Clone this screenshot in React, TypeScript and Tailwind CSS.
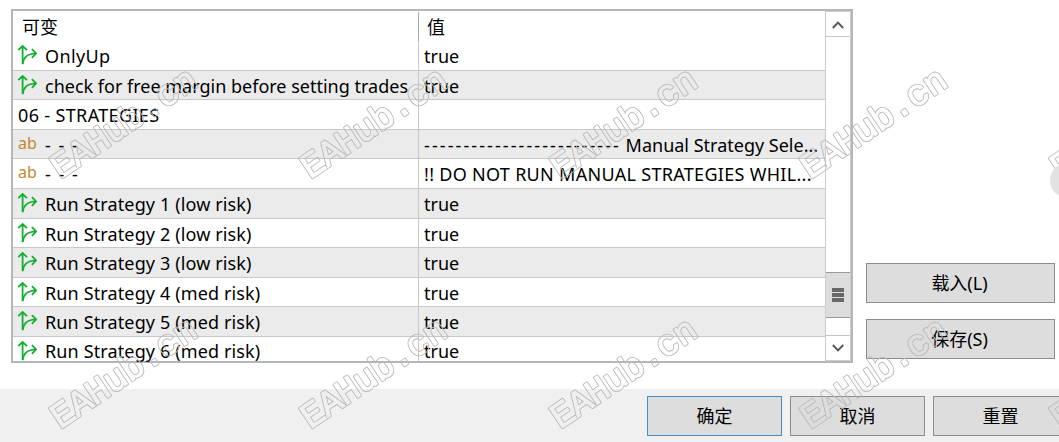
import type { ReactNode } from "react";

type Kind = "bool" | "string" | "group";

interface Row {
  kind: Kind;
  name: string;
  value: ReactNode;
  size: string;
  nameSpacing: string;
}

const rows: Row[] = [
  { kind: "bool", name: "OnlyUp", value: "true", size: "h-[30px]", nameSpacing: "tracking-[0.35px]" },
  { kind: "bool", name: "check for free margin before setting trades", value: "true", size: "h-[29px]", nameSpacing: "tracking-normal" },
  { kind: "group", name: "06 - STRATEGIES", value: "", size: "h-[30px]", nameSpacing: "tracking-[0.35px]" },
  {
    kind: "string",
    name: "- - -",
    value: (
      <>
        <span className="tracking-[2.08px]">-------------------------</span> Manual Strategy Sele...
      </>
    ),
    size: "h-[29px]",
    nameSpacing: "tracking-[1.5px]",
  },
  {
    kind: "string",
    name: "- - -",
    value: <span className="tracking-[0.3px]">!! DO NOT RUN MANUAL STRATEGIES WHIL...</span>,
    size: "h-[30px]",
    nameSpacing: "tracking-[1.5px]",
  },
  { kind: "bool", name: "Run Strategy 1 (low risk)", value: "true", size: "h-[30px]", nameSpacing: "tracking-[0.13px]" },
  { kind: "bool", name: "Run Strategy 2 (low risk)", value: "true", size: "h-[29px]", nameSpacing: "tracking-[0.13px]" },
  { kind: "bool", name: "Run Strategy 3 (low risk)", value: "true", size: "h-[30px]", nameSpacing: "tracking-[0.13px]" },
  { kind: "bool", name: "Run Strategy 4 (med risk)", value: "true", size: "h-[29px]", nameSpacing: "tracking-[0.13px]" },
  { kind: "bool", name: "Run Strategy 5 (med risk)", value: "true", size: "h-[30px]", nameSpacing: "tracking-[0.13px]" },
  { kind: "bool", name: "Run Strategy 6 (med risk)", value: "true", size: "h-[24px]", nameSpacing: "tracking-[0.13px]" },
];

function BranchIcon() {
  return (
    <svg width="20" height="20" viewBox="0 0 20 20" fill="none" stroke="#14ae32" strokeWidth="1.8" className="block">
      <path d="M5.6 19.3V1.2M1.2 5.2 5.6 1 10 5.2" />
      <path d="M5.8 18.6C6.6 12 10 8.8 19 8.4M14.9 4.1l4.3 4.3-4.3 4.5" />
    </svg>
  );
}

function TableRow({ row, index }: { row: Row; index: number }) {
  const last = index === rows.length - 1;
  return (
    <div className={`flex shrink-0 ${row.size} ${index % 2 ? "bg-[#ebebeb]" : "bg-white"} ${last ? "" : "border-b border-[#c8c8c8]"}`}>
      <div className="flex w-[406px] shrink-0 border-r border-[#c8c8c8]">
        {row.kind === "bool" && (
          <span className="w-[32px] shrink-0 pl-[4px] pt-[4px]">
            <BranchIcon />
          </span>
        )}
        {row.kind === "string" && (
          <span className="w-[32px] shrink-0 pl-[5px] text-[16px] leading-[26px] text-[#c4882c]">ab</span>
        )}
        <span className={`whitespace-pre ${last ? "leading-[29px]" : "leading-[31px]"} ${row.kind === "group" ? "pl-[5px]" : ""} ${row.nameSpacing}`}>{row.name}</span>
      </div>
      <span className={`whitespace-pre pl-[5px] ${last ? "leading-[29px]" : "leading-[31px]"}`}>{row.value}</span>
    </div>
  );
}

function Button({ children, className }: { children: ReactNode; className: string }) {
  return (
    <button className={`flex h-[40px] shrink-0 items-center justify-center border bg-[#dddddd] ${className}`}>{children}</button>
  );
}

const letters = [..."EAHub.cn"];
const advance = letters.map((_, i) => 10 + i * 21).join(" ");

function Watermark() {
  const spots = [157, 407].flatMap((y) => [46, 296, 546, 796, 1046].map((x) => ({ x, y })));
  return (
    <svg width="1059" height="442" className="pointer-events-none absolute inset-0" fontFamily="'Liberation Mono', monospace" fontSize="36" textAnchor="middle" strokeLinejoin="round">
      <defs>
        <mask id="hollow" maskUnits="userSpaceOnUse" x="-10" y="-20" width="200" height="60">
          <rect x="-10" y="-20" width="200" height="60" fill="white" />
          <text x={advance} y="26.5" fill="black" stroke="black" strokeWidth="1">EAHub.cn</text>
        </mask>
      </defs>
      {spots.map(({ x, y }) => (
        <g key={`${x}-${y}`} transform={`translate(${x} ${y}) rotate(-34)`}>
          <text x={advance} y="26.5" fill="#b8b8b8" stroke="#b8b8b8" strokeWidth="2.7" mask="url(#hollow)">EAHub.cn</text>
        </g>
      ))}
    </svg>
  );
}

export default function App() {
  return (
    <div className="relative flex h-[442px] w-[1059px] flex-col overflow-hidden bg-white font-['Noto_Sans','Noto_Sans_CJK_SC',sans-serif] text-[18px] text-black">
      <div className="flex h-[389px] shrink-0 pl-[11px] pt-[9px]">
        <div className="flex h-[354px] w-[842px] shrink-0 border-2 border-[#b4b6be]">
          <div className="flex w-[812px] shrink-0 flex-col">
            <div className="flex h-[30px] shrink-0 pt-px leading-[31px]">
              <div className="w-[406px] border-r border-[#a8a8a8] pl-[9px]">可变</div>
              <div className="pl-[8px]">值</div>
            </div>
            {rows.map((row, i) => (
              <TableRow key={i} row={row} index={i} />
            ))}
          </div>
          <div className="flex w-[26px] shrink-0 flex-col border border-[#cccccc]">
            <div className="flex h-[25px] items-center justify-center border-b border-[#c4c4c4] pt-[2px]">
              <svg width="12" height="8" viewBox="0 0 12 8" fill="none" stroke="#555" strokeWidth="1.9"><path d="m.8 7 5.2-5.3L11.2 7" /></svg>
            </div>
            <div className="h-[235px]" />
            <div className="flex h-[46px] flex-col items-center justify-center gap-px border-y border-[#999] bg-[#dddddd]">
              <span className="h-[4px] w-[12px] bg-[#686868]" />
              <span className="h-[4px] w-[12px] bg-[#686868]" />
              <span className="h-[4px] w-[12px] bg-[#686868]" />
            </div>
            <div className="h-[17px]" />
            <div className="flex h-[25px] items-center justify-center border-t border-[#c4c4c4]">
              <svg width="12" height="8" viewBox="0 0 12 8" fill="none" stroke="#555" strokeWidth="1.9"><path d="m.8 1 5.2 5.3L11.2 1" /></svg>
            </div>
          </div>
        </div>
        <div className="ml-[13px] flex flex-col gap-[16px] pt-[254px]">
          <Button className="w-[189px] border-[#8c8c8c] pr-[2px]">载入(L)</Button>
          <Button className="w-[189px] border-[#8c8c8c] pr-[2px]">保存(S)</Button>
        </div>
      </div>
      <div className="flex h-[53px] shrink-0 gap-[8px] bg-[#f0f0f0] pl-[647px] pt-[7px]">
        <Button className="w-[135px] border-[#4a8dbd]">确定</Button>
        <Button className="w-[135px] border-[#8c8c8c]">取消</Button>
        <Button className="w-[135px] border-[#8c8c8c]">重置</Button>
      </div>
      <Watermark />
      <div className="absolute left-[1050px] top-[163px] size-[35px] rounded-full bg-[#e2e2e2]" />
    </div>
  );
}
